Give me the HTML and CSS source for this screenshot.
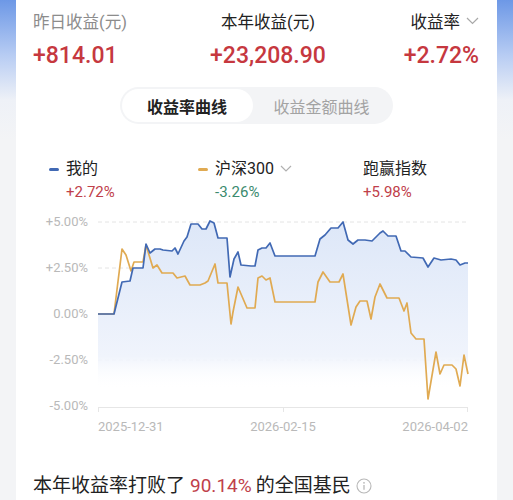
FILE: index.html
```html
<!DOCTYPE html>
<html lang="zh-CN">
<head>
    <meta charset="UTF-8">
    <meta name="viewport" content="width=device-width, initial-scale=1.0">
    <title>收益走势</title>
    <link rel="stylesheet" href="styles.css">
</head>
<body>
    <div class="card">
        <div class="summary">
            <div class="cell">
                <div class="cell-label muted">昨日收益(元)</div>
                <div class="cell-value">+814.01</div>
            </div>
            <div class="cell center">
                <div class="cell-label">本年收益(元)</div>
                <div class="cell-value">+23,208.90</div>
            </div>
            <div class="cell right">
                <div class="cell-label">收益率<svg class="chevron" width="13" height="8" viewBox="0 0 13 8"><polyline points="1,1 6.5,6.5 12,1" fill="none" stroke="#a8a8a8" stroke-width="1.2"/></svg></div>
                <div class="cell-value">+2.72%</div>
            </div>
        </div>

        <div class="toggle">
            <div class="toggle-item active">收益率曲线</div>
            <div class="toggle-item">收益金额曲线</div>
        </div>

        <div class="legend">
            <div class="legend-item">
                <div class="legend-name"><span class="dash blue"></span>我的</div>
                <div class="legend-value up">+2.72%</div>
            </div>
            <div class="legend-item">
                <div class="legend-name"><span class="dash orange"></span>沪深300
                    <svg class="chevron" width="12" height="8" viewBox="0 0 12 8"><polyline points="1,1 6,6 11,1" fill="none" stroke="#b0b0b0" stroke-width="1.2"/></svg>
                </div>
                <div class="legend-value down">-3.26%</div>
            </div>
            <div class="legend-item plain">
                <div class="legend-name">跑赢指数</div>
                <div class="legend-value up">+5.98%</div>
            </div>
        </div>

        <div class="chart">
            <div class="y-axis">
                <span>+5.00%</span>
                <span>+2.50%</span>
                <span>0.00%</span>
                <span>-2.50%</span>
                <span>-5.00%</span>
            </div>
            <svg class="plot" width="374" height="202" viewBox="96 212 374 202">
                <defs>
                    <linearGradient id="area" gradientUnits="userSpaceOnUse" x1="0" y1="222" x2="0" y2="390">
                        <stop offset="0" stop-color="#dde7f8"/>
                        <stop offset="0.8" stop-color="#f0f4fc"/>
                        <stop offset="1" stop-color="#ffffff" stop-opacity="0"/>
                    </linearGradient>
                </defs>
                <g stroke="#e4e4e4" stroke-width="1" stroke-dasharray="4 3">
                    <line x1="98" y1="222" x2="468" y2="222"/>
                    <line x1="98" y1="268" x2="468" y2="268"/>
                    <line x1="98" y1="314" x2="468" y2="314"/>
                    <line x1="98" y1="360" x2="468" y2="360"/>
                </g>
                <polygon fill="url(#area)" points="98,407 98,314 114,314 122,282 130,281 133,268 143,268 146,244 150,253 155,249 160,249 163,250 172,251 175,248 178,254 184,241 187,237 191,224 198,224 202,229 206,229 210,221 214,223 218,238 227,238 230,277 234,259 238,252 241,265 251,266 255,266 258,250 262,248 266,248 270,243 275,256 315,256 320,239 325,235 331,228 338,228 343,222 348,240 353,244 358,240 365,240 372,241 380,233 383,231 388,236 396,236 401,251 405,251 411,257 423,258 428,267 434,258 441,260 451,259 456,260 460,265 465,263 468,263 468,407"/>
                <g stroke="#e6e6e6" stroke-width="1">
                    <line x1="98" y1="407.5" x2="468" y2="407.5"/>
                    <line x1="98.5" y1="407" x2="98.5" y2="412"/>
                    <line x1="283.5" y1="407" x2="283.5" y2="412"/>
                    <line x1="467.5" y1="407" x2="467.5" y2="412"/>
                </g>
                <polyline fill="none" stroke="#e0aa52" stroke-width="1.7" stroke-linejoin="round" points="98,314 114,314 122,249 126,255 131,271 134,262 143,262 146,245 153,268 157,265 162,273 173,273 177,278 185,276 190,285 200,285 205,283 208,281 215,264 218,283 227,283 231,324 233,312 238,287 247,308 255,308 258,278 262,276 266,280 270,278 275,302 315,302 318,282 323,272 330,282 339,282 343,274 351,325 356,307 360,301 367,301 371,319 375,297 380,284 387,298 399,298 404,311 407,303 411,333 416,339 424,339 428,399 436,352 440,374 444,365 452,365 456,369 460,386 464,355 468,374"/>
                <polyline fill="none" stroke="#4169b4" stroke-width="1.7" stroke-linejoin="round" points="98,314 114,314 122,282 130,281 133,268 143,268 146,244 150,253 155,249 160,249 163,250 172,251 175,248 178,254 184,241 187,237 191,224 198,224 202,229 206,229 210,221 214,223 218,238 227,238 230,277 234,259 238,252 241,265 251,266 255,266 258,250 262,248 266,248 270,243 275,256 315,256 320,239 325,235 331,228 338,228 343,222 348,240 353,244 358,240 365,240 372,241 380,233 383,231 388,236 396,236 401,251 405,251 411,257 423,258 428,267 434,258 441,260 451,259 456,260 460,265 465,263 468,263"/>
            </svg>
        </div>
        <div class="x-axis">
            <span>2025-12-31</span>
            <span>2026-02-15</span>
            <span>2026-04-02</span>
        </div>

        <div class="rank">本年收益率打败了<span class="up pct">90.14%</span>的全国基民<svg class="info" width="16" height="16" viewBox="0 0 16 16">
                <circle cx="8" cy="8" r="7" fill="none" stroke="#b8b8b8" stroke-width="1.1"/>
                <circle cx="8" cy="4.8" r="0.9" fill="#b8b8b8"/>
                <line x1="8" y1="7" x2="8" y2="11.8" stroke="#b8b8b8" stroke-width="1.3"/>
            </svg></div>
    </div>
</body>
</html>
```

FILE: styles.css
```css
body {
    margin: 0;
    font-family: Roboto, "Noto Sans CJK SC", sans-serif;
    color: #222;
    background: linear-gradient(to bottom, #6d98e6 0, #b7ccf3 55px, #eef1f7 100px, #f3f4f6 140px);
    min-height: 500px;
}


.card {
    background-color: white;
    margin: 0 16px;
    padding: 12px 18px 20px 17px;
    min-height: 500px;
    box-sizing: border-box;
}


.summary {
    display: grid;
    grid-template-columns: 170px 130px 1fr;
}

.cell {
    white-space: nowrap;
}

.cell.center {
    text-align: center;
}

.cell.right {
    text-align: right;
}

.cell-label {
    font-size: 16.5px;
    line-height: 22px;
    height: 22px;
}

.muted {
    color: #8c8c8c;
}

.cell-value {
    margin-top: 7px;
    font-size: 23px;
    line-height: 30px;
    font-weight: 500;
    color: #c6383f;
}

.chevron {
    margin-left: 6px;
    vertical-align: 3px;
}


.toggle {
    display: flex;
    width: 273px;
    height: 37px;
    margin: 16px auto 0;
    padding: 2px;
    box-sizing: border-box;
    background-color: #f3f4f6;
    border-radius: 19px;
}

.toggle-item {
    display: flex;
    align-items: center;
    justify-content: center;
    font-size: 16px;
    color: #a3a3a3;
    flex: 1;
}

.toggle-item.active {
    flex: none;
    width: 131px;
    background-color: white;
    border-radius: 17px;
    color: #222;
    font-weight: bold;
}


.legend {
    display: grid;
    grid-template-columns: 149px 165px 1fr;
    margin-top: 34px;
    padding-left: 16px;
}

.legend-name {
    display: flex;
    align-items: center;
    font-size: 16px;
    line-height: 22px;
    color: #222;
}

.legend-value {
    margin-top: 2px;
    padding-left: 17px;
    font-size: 15px;
    line-height: 20px;
}

.legend-item.plain .legend-value {
    padding-left: 0;
}

.dash {
    width: 10px;
    height: 3px;
    border-radius: 2px;
    margin-right: 7px;
}

.dash.blue {
    background-color: #4169b4;
}

.dash.orange {
    background-color: #e0aa52;
}

.legend-name .chevron {
    margin-left: 6px;
    vertical-align: 0;
}

.up {
    color: #c0404a;
}

.down {
    color: #3b8b6e;
}


.chart {
    display: flex;
    margin-top: 10px;
    height: 202px;
}

.y-axis {
    width: 55px;
    margin-right: 8px;
    padding-top: 2px;
    box-sizing: border-box;
    display: flex;
    flex-direction: column;
    justify-content: space-between;
    align-items: flex-end;
    font-size: 13px;
    line-height: 16px;
    color: #b9b9b9;
}

.plot {
    display: block;
}

.x-axis {
    display: flex;
    justify-content: space-between;
    margin: 4px 0 0 65px;
    width: 370px;
    font-size: 13px;
    line-height: 18px;
    color: #b9b9b9;
}


.rank {
    display: flex;
    align-items: center;
    margin-top: 37px;
    font-size: 19px;
    line-height: 26px;
    color: #222;
    white-space: nowrap;
}

.pct {
    margin: 0 4px 0 5px;
}

.info {
    margin-left: 5px;
}
```
